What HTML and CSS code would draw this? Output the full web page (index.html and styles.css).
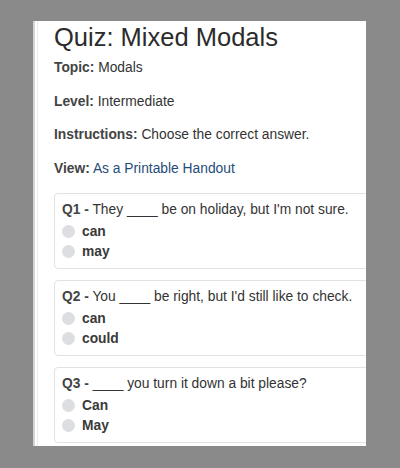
FILE: index.html
```html
<!DOCTYPE html>
<html lang="en">
<head>
<meta charset="utf-8">
<title>Quiz: Mixed Modals</title>
<link rel="stylesheet" href="styles.css">
</head>
<body>
<div class="panel">
  <div class="content">
    <h1 class="title">Quiz: Mixed Modals</h1>
    <p class="meta"><b>Topic:</b> Modals</p>
    <p class="meta"><b>Level:</b> Intermediate</p>
    <p class="meta"><b>Instructions:</b> Choose the correct answer.</p>
    <p class="meta"><b>View:</b> <a href="#" class="link">As a Printable Handout</a></p>

    <div class="card">
      <div class="question"><b>Q1 -</b> They ____ be on holiday, but I'm not sure.</div>
      <label class="option"><span class="radio"></span><b>can</b></label>
      <label class="option"><span class="radio"></span><b>may</b></label>
    </div>

    <div class="card">
      <div class="question"><b>Q2 -</b> You ____ be right, but I'd still like to check.</div>
      <label class="option"><span class="radio"></span><b>can</b></label>
      <label class="option"><span class="radio"></span><b>could</b></label>
    </div>

    <div class="card">
      <div class="question"><b>Q3 -</b> ____ you turn it down a bit please?</div>
      <label class="option"><span class="radio"></span><b>Can</b></label>
      <label class="option"><span class="radio"></span><b>May</b></label>
    </div>
  </div>
</div>
</body>
</html>
```
FILE: styles.css
```css
html, body {
  margin: 0;
  padding: 0;
  background: #8a8a8a;
}

body {
  font-family: "Liberation Sans", Arial, sans-serif;
  color: #333;
  height: 468px;
  overflow: hidden;
}

.panel {
  margin: 21px 0 0 33px;
  width: 331px;
  height: 425px;
  overflow: hidden;
  background: #fff;
  border-left: 2px solid #d4d4d4;
  display: flex;
}

.content {
  flex: 0 0 auto;
  width: 360px;
  margin-left: 2px;
  border-left: 1px solid #ebebeb;
  padding-left: 16px;
}

.title {
  margin: 1px 0 6px;
  font-size: 25.5px;
  font-weight: 400;
  line-height: 30px;
  color: #2b2b2b;
}

.meta {
  margin: 0 0 13.7px;
  font-size: 13.8px;
  line-height: 20px;
}

.meta b {
  color: #444;
}

.link {
  color: #1f4c78;
  text-decoration: none;
}

.card {
  border: 1px solid #e2e2e2;
  border-radius: 4px;
  padding: 6px 7px;
  margin: 0 0 11px;
  font-size: 13.8px;
  line-height: 20px;
}

.card:first-of-type {
  margin-top: 0.3px;
}

.question {
  margin-bottom: 2px;
}

.question b {
  color: #444;
}

.option {
  display: flex;
  align-items: center;
  gap: 7px;
}

.option b {
  color: #3a3a3a;
}

.radio {
  width: 13px;
  height: 13px;
  border-radius: 50%;
  background: #dcdee2;
  flex: 0 0 auto;
}
```
